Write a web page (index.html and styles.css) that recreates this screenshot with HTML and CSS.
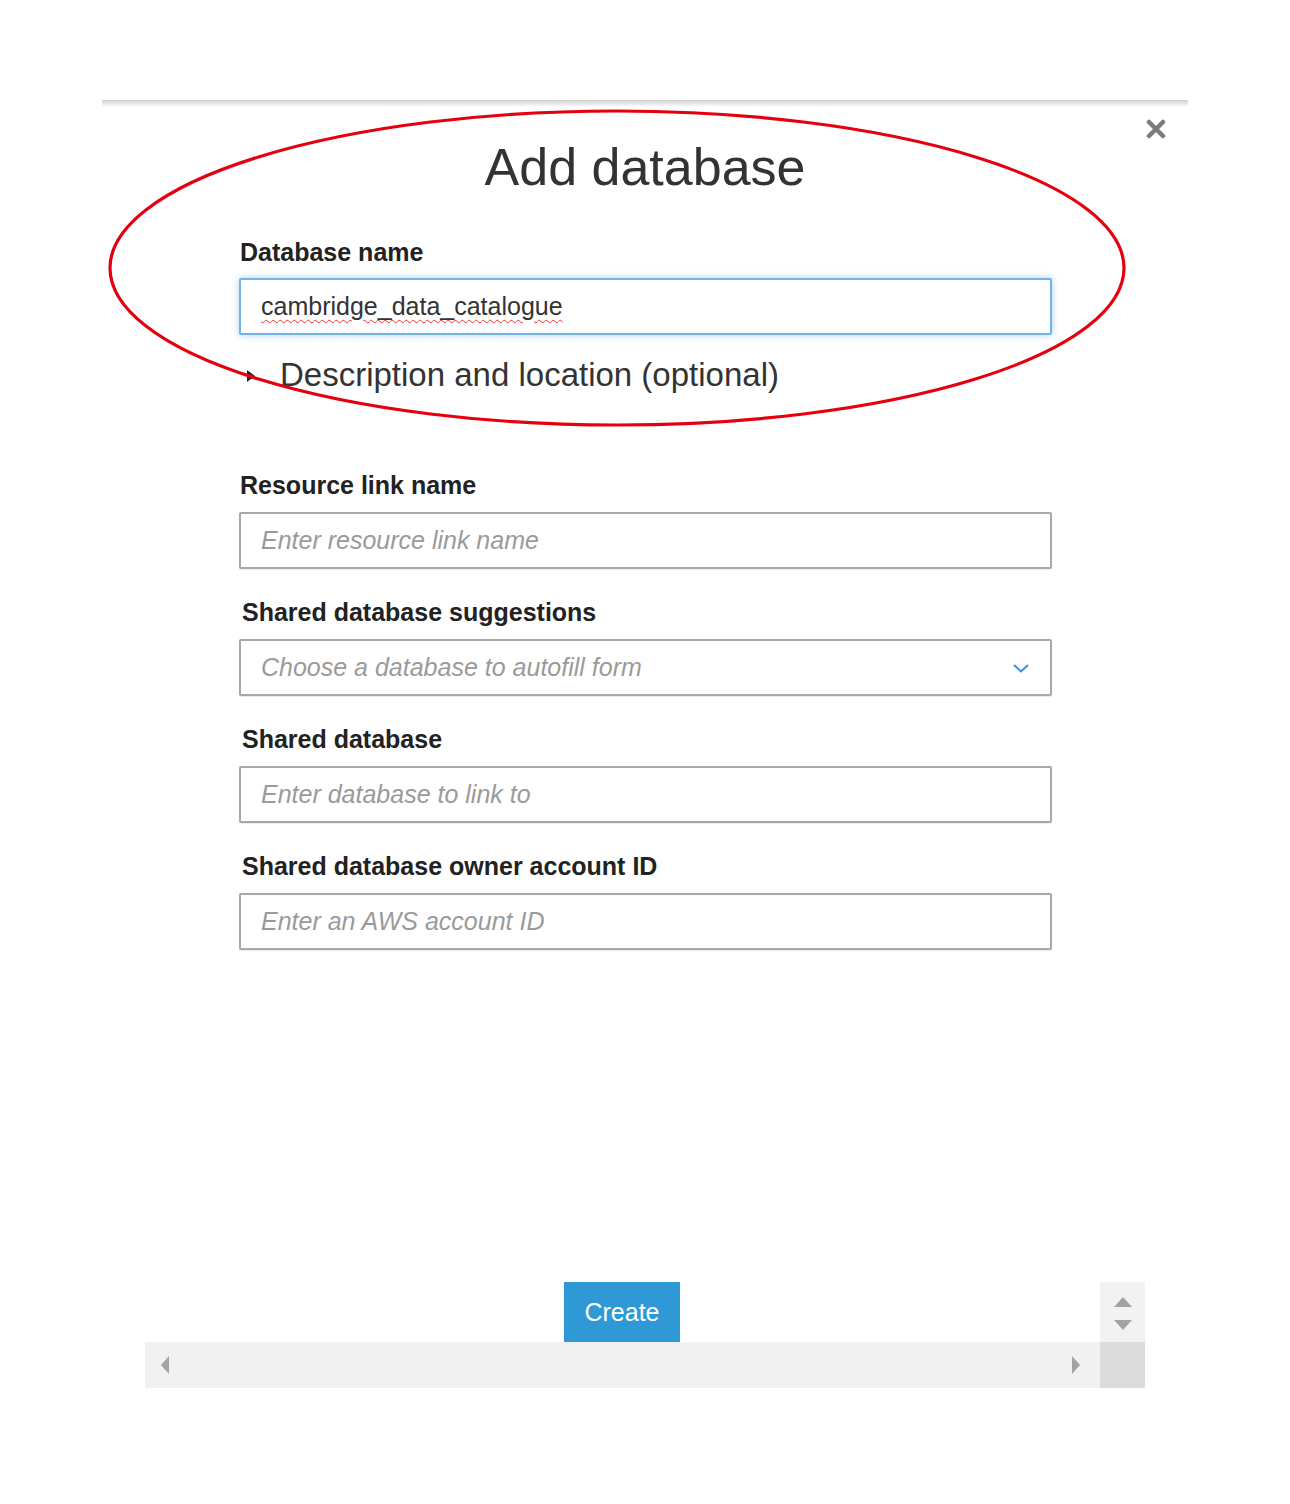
FILE: index.html
```html
<!DOCTYPE html>
<html lang="en">
<head>
<meta charset="utf-8">
<title>Add database</title>
<link rel="stylesheet" href="styles.css">
</head>
<body>
<div class="page">
  <div class="topline"></div>
  <div class="dialog">
    <button class="close" aria-label="Close">
      <svg width="20" height="20" viewBox="0 0 20 20"><path d="M3 3 L17 17 M17 3 L3 17" stroke="#7b7b7b" stroke-width="4.5" stroke-linecap="round"/></svg>
    </button>
    <h1 class="title">Add database</h1>
    <div class="form">
      <label class="label first">Database name</label>
      <div class="input focused"><span class="value">cambridge_data_catalogue</span></div>
      <div class="expander">
        <span class="caret"></span>
        <span class="exp-text">Description and location (optional)</span>
      </div>

      <label class="label spaced">Resource link name</label>
      <div class="input"><span class="ph">Enter resource link name</span></div>

      <label class="label next">Shared database suggestions</label>
      <div class="input select"><span class="ph">Choose a database to autofill form</span>
        <svg class="chev" width="18" height="12" viewBox="0 0 18 12"><path d="M2 3 L9 9.5 L16 3" fill="none" stroke="#3b8fd8" stroke-width="2"/></svg>
      </div>

      <label class="label next">Shared database</label>
      <div class="input"><span class="ph">Enter database to link to</span></div>

      <label class="label next">Shared database owner account ID</label>
      <div class="input"><span class="ph">Enter an AWS account ID</span></div>
    </div>
  </div>

  <div class="frame">
    <div class="btn-cell"><button class="create">Create</button></div>
    <div class="vscroll">
      <span class="arr up"></span>
      <span class="arr down"></span>
    </div>
    <div class="hscroll">
      <span class="arr left"></span>
      <span class="arr right"></span>
    </div>
    <div class="corner"></div>
  </div>

  <svg class="annot" width="1290" height="1504" viewBox="0 0 1290 1504">
    <ellipse cx="617" cy="268" rx="507" ry="157" fill="none" stroke="#e5000f" stroke-width="3.2"/>
  </svg>
</div>
</body>
</html>
```

FILE: styles.css
```css
html, body {
  margin: 0;
  padding: 0;
  background: #ffffff;
}
body {
  font-family: "Liberation Sans", Arial, sans-serif;
  color: #333;
}
.page {
  position: relative;
  width: 1290px;
  height: 1504px;
  padding-top: 100px;
  box-sizing: border-box;
  overflow: hidden;
}
.topline {
  margin-left: 102px;
  width: 1086px;
  height: 7px;
  background: linear-gradient(#cfcfcf, #e2e2e2 40%, #f3f3f3 75%, #ffffff);
}
.dialog {
  position: relative;
  margin-left: 102px;
  width: 1086px;
  padding-top: 34px;
}
.close {
  position: absolute;
  left: 1043px;
  top: 11px;
  width: 22px;
  height: 22px;
  padding: 0;
  border: 0;
  background: none;
  display: flex;
  align-items: center;
  justify-content: center;
}
.title {
  margin: 0;
  font-size: 52px;
  line-height: 52px;
  font-weight: normal;
  text-align: center;
  color: #333;
}
.form {
  margin-left: 137px;
  width: 813px;
  display: flex;
  flex-direction: column;
}
.label {
  display: block;
  font-size: 25px;
  line-height: 30px;
  font-weight: bold;
  color: #222;
  padding-left: 1px;
}
.label.first { margin-top: 44px; }
.label.spaced { margin-top: 75px; }
.label.next { margin-top: 28px; padding-left: 3px; }
.input {
  margin-top: 12px;
  height: 57px;
  box-sizing: border-box;
  border: 2px solid #a8a8a8;
  border-radius: 2px;
  display: flex;
  align-items: center;
  padding-left: 20px;
  padding-right: 20px;
  font-size: 25px;
  background: #fff;
  box-shadow: 0 1px 1px rgba(0,0,0,0.08);
}
.input.focused {
  margin-top: 11px;
  border-color: #72b3e8;
  box-shadow: 0 0 7px rgba(100, 170, 230, 0.55);
}
.value {
  color: #333;
  text-decoration: underline wavy #e33;
  text-decoration-thickness: 1px;
  text-underline-offset: 4px;
}
.ph {
  color: #9a9a9a;
  font-style: italic;
  flex: 1;
}
.expander {
  margin-top: 20px;
  height: 40px;
  display: flex;
  align-items: center;
  padding-left: 8px;
}
.caret {
  width: 0;
  height: 0;
  border-top: 6px solid transparent;
  border-bottom: 6px solid transparent;
  border-left: 8px solid #222;
  margin-right: 25px;
  margin-top: 2px;
}
.exp-text {
  font-size: 33px;
  line-height: 40px;
  color: #333;
}
.frame {
  margin-top: 332px;
  margin-left: 145px;
  width: 1000px;
  display: grid;
  grid-template-columns: 955px 45px;
  grid-template-rows: 60px 46px;
}
.btn-cell {
  display: flex;
  justify-content: center;
}
.create {
  width: 116px;
  height: 60px;
  border: 0;
  background: #2f98d6;
  color: #fff;
  font-family: "Liberation Sans", Arial, sans-serif;
  font-size: 25px;
  padding: 0;
  margin-right: 1px;
}
.vscroll {
  background: #f2f2f2;
  display: flex;
  flex-direction: column;
  align-items: center;
  justify-content: center;
  gap: 13px;
  padding-top: 2px;
}
.hscroll {
  background: #f1f1f1;
  display: flex;
  align-items: center;
  justify-content: space-between;
  padding: 0 20px 0 16px;
}
.corner {
  background: #dcdcdc;
}
.arr {
  width: 0;
  height: 0;
  display: block;
}
.arr.up {
  border-left: 9px solid transparent;
  border-right: 9px solid transparent;
  border-bottom: 10px solid #a3a3a3;
}
.arr.down {
  border-left: 9px solid transparent;
  border-right: 9px solid transparent;
  border-top: 10px solid #a3a3a3;
}
.arr.left {
  border-top: 9px solid transparent;
  border-bottom: 9px solid transparent;
  border-right: 8px solid #a3a3a3;
}
.arr.right {
  border-top: 9px solid transparent;
  border-bottom: 9px solid transparent;
  border-left: 8px solid #a3a3a3;
}
.annot {
  position: absolute;
  left: 0;
  top: 0;
  pointer-events: none;
}
```
